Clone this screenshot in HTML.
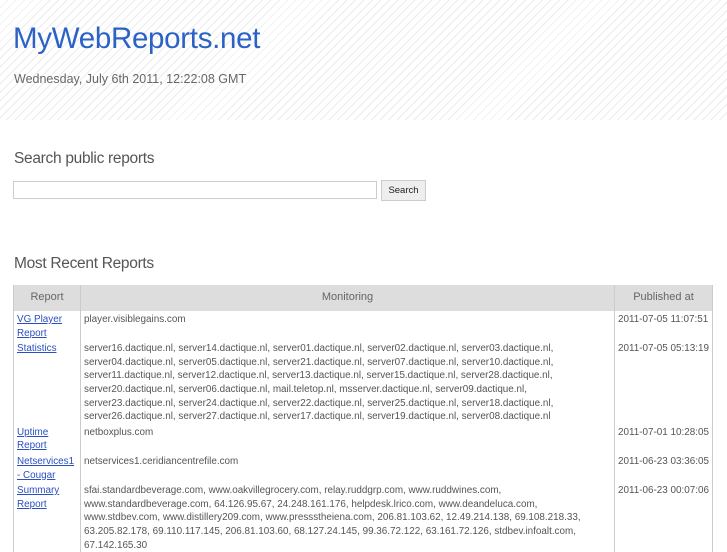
<!DOCTYPE html>
<html><head><meta charset="utf-8"><style>
body{margin:0;width:727px;height:545px;overflow:hidden;font-family:"Liberation Sans",sans-serif;background:#fff;position:relative}
.hdr{position:absolute;left:0;top:0;width:727px;height:120px;background:repeating-linear-gradient(135deg,#fff 0,#fff 5px,#ececec 5px,#ececec 6px)}
.a{position:absolute;white-space:nowrap}
h1{position:absolute;left:13px;top:22px;margin:0;font-weight:normal;font-size:29.5px;color:#2a62c6;letter-spacing:-0.3px}
.date{left:14px;top:72px;font-size:12.5px;color:#666}
.h2{font-size:15.5px;color:#555;letter-spacing:-0.3px}
input{position:absolute;left:13px;top:181px;width:364px;height:18px;box-sizing:border-box;border:1px solid #ccc;margin:0}
.btn{position:absolute;left:381px;top:180px;width:45px;height:21px;box-sizing:border-box;border:1px solid #ccc;background:#eee;font-size:9.5px;text-align:center;line-height:19px;color:#222}
table{position:absolute;left:13px;top:285px;width:700px;border-collapse:collapse;font-size:9.9px;color:#555;line-height:13.6px}
th{background:#ddd;font-weight:normal;height:26px;font-size:11px;color:#666;padding:0;border-left:1px solid #ccc;border-right:1px solid #ccc}
td{vertical-align:top;padding:2px 3px 0 3px;border-left:1px solid #ccc;border-right:1px solid #ccc}
td a{color:#2a4fc0;text-decoration:underline}
</style></head><body>
<div class="hdr"></div>
<h1>MyWebReports.net</h1>
<div class="a date">Wednesday, July 6th 2011, 12:22:08 GMT</div>
<div class="a h2" style="left:14px;top:150px">Search public reports</div>
<input type="text">
<div class="btn">Search</div>
<div class="a h2" style="left:14px;top:255px">Most Recent Reports</div>
<table>
<tr><th style="width:66px">Report</th><th>Monitoring</th><th style="width:97px">Published at</th></tr>
<tr><td><a>VG Player Report</a></td><td>player.visiblegains.com</td><td>2011-07-05 11:07:51</td></tr>
<tr><td><a>Statistics</a></td><td>server16.dactique.nl, server14.dactique.nl, server01.dactique.nl, server02.dactique.nl, server03.dactique.nl,<br>server04.dactique.nl, server05.dactique.nl, server21.dactique.nl, server07.dactique.nl, server10.dactique.nl,<br>server11.dactique.nl, server12.dactique.nl, server13.dactique.nl, server15.dactique.nl, server28.dactique.nl,<br>server20.dactique.nl, server06.dactique.nl, mail.teletop.nl, msserver.dactique.nl, server09.dactique.nl,<br>server23.dactique.nl, server24.dactique.nl, server22.dactique.nl, server25.dactique.nl, server18.dactique.nl,<br>server26.dactique.nl, server27.dactique.nl, server17.dactique.nl, server19.dactique.nl, server08.dactique.nl</td><td>2011-07-05 05:13:19</td></tr>
<tr><td><a>Uptime Report</a></td><td>netboxplus.com</td><td>2011-07-01 10:28:05</td></tr>
<tr><td><a>Netservices1 - Cougar</a></td><td>netservices1.ceridiancentrefile.com</td><td>2011-06-23 03:36:05</td></tr>
<tr><td><a>Summary Report</a></td><td>sfai.standardbeverage.com, www.oakvillegrocery.com, relay.ruddgrp.com, www.ruddwines.com,<br>www.standardbeverage.com, 64.126.95.67, 24.248.161.176, helpdesk.lrico.com, www.deandeluca.com,<br>www.stdbev.com, www.distillery209.com, www.pressstheiena.com, 206.81.103.62, 12.49.214.138, 69.108.218.33,<br>63.205.82.178, 69.110.117.145, 206.81.103.60, 68.127.24.145, 99.36.72.122, 63.161.72.126, stdbev.infoalt.com,<br>67.142.165.30</td><td>2011-06-23 00:07:06</td></tr>
</table>
</body></html>
